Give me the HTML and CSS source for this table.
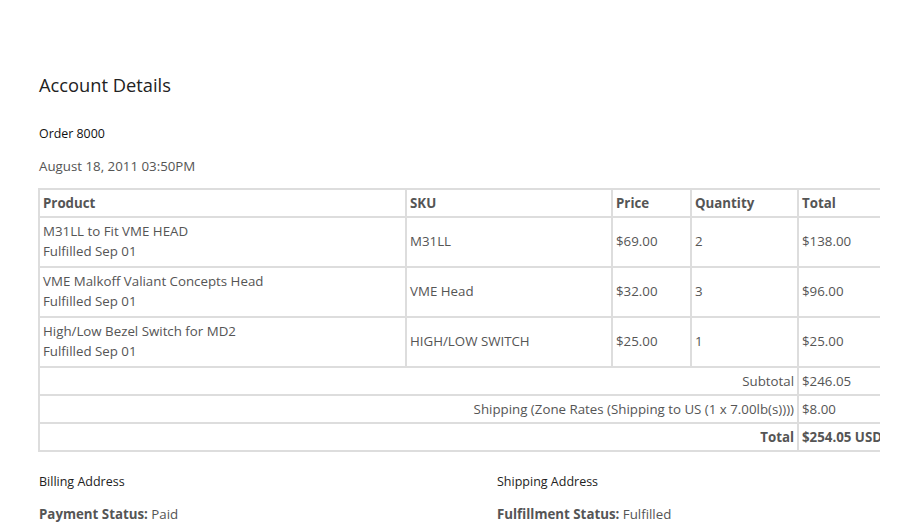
FILE: index.html
```html
<!DOCTYPE html>
<html lang="en">
<head>
    <meta charset="UTF-8">
    <meta name="viewport" content="width=device-width, initial-scale=1.0">
    <title>Account Details</title>
    <link rel="stylesheet" href="styles.css">
</head>
<body>
    <div class="page">
        <h1 class="title">Account Details</h1>
        <p class="order-no">Order 8000</p>
        <p class="order-date">August 18, 2011 03:50PM</p>

        <div class="table-wrap">
            <table class="order-table">
                <thead>
                    <tr>
                        <th class="col-product">Product</th>
                        <th class="col-sku">SKU</th>
                        <th class="col-price">Price</th>
                        <th class="col-qty">Quantity</th>
                        <th class="col-total">Total</th>
                    </tr>
                </thead>
                <tbody>
                    <tr class="item">
                        <td>M31LL to Fit VME HEAD<br>Fulfilled Sep 01</td>
                        <td>M31LL</td>
                        <td>$69.00</td>
                        <td>2</td>
                        <td>$138.00</td>
                    </tr>
                    <tr class="item">
                        <td>VME Malkoff Valiant Concepts Head<br>Fulfilled Sep 01</td>
                        <td>VME Head</td>
                        <td>$32.00</td>
                        <td>3</td>
                        <td>$96.00</td>
                    </tr>
                    <tr class="item">
                        <td>High/Low Bezel Switch for MD2<br>Fulfilled Sep 01</td>
                        <td>HIGH/LOW SWITCH</td>
                        <td>$25.00</td>
                        <td>1</td>
                        <td>$25.00</td>
                    </tr>
                </tbody>
                <tfoot>
                    <tr>
                        <td colspan="4" class="sum-label">Subtotal</td>
                        <td>$246.05</td>
                    </tr>
                    <tr>
                        <td colspan="4" class="sum-label">Shipping (Zone Rates (Shipping to US (1 x 7.00lb(s))))</td>
                        <td>$8.00</td>
                    </tr>
                    <tr class="grand">
                        <td colspan="4" class="sum-label">Total</td>
                        <td>$254.05 USD</td>
                    </tr>
                </tfoot>
            </table>
        </div>

        <div class="addresses">
            <div class="address">
                <p class="address-title">Billing Address</p>
                <p class="status"><strong>Payment Status:</strong> Paid</p>
            </div>
            <div class="address">
                <p class="address-title">Shipping Address</p>
                <p class="status"><strong>Fulfillment Status:</strong> Fulfilled</p>
            </div>
        </div>
    </div>
</body>
</html>
```

FILE: styles.css
```css
* {
    margin: 0;
    padding: 0;
    box-sizing: border-box;
}
body {
    font-family: 'Open Sans', 'Noto Sans', sans-serif;
    font-size: 13.3px;
    color: #555;
    background: #fff;
}
.page {
    padding: 71px 0 0 39px;
}
.title {
    font-size: 18.3px;
    font-weight: normal;
    line-height: 28px;
    color: #222;
}
.order-no {
    margin-top: 25px;
    font-size: 12.4px;
    line-height: 20px;
    color: #111;
}
.order-date {
    margin-top: 12px;
    line-height: 20px;
    color: #555;
}
.table-wrap {
    margin-top: 12px;
    margin-left: -1px;
    width: 842px;
    overflow: hidden;
}
.order-table {
    border-collapse: collapse;
    width: 880px;
    table-layout: fixed;
}
.order-table th,
.order-table td {
    border: 2px solid #ddd;
    padding: 3px;
    line-height: 20px;
    text-align: left;
    vertical-align: middle;
    white-space: nowrap;
}
.order-table th {
    font-weight: bold;
}
.col-product { width: 367px; }
.col-sku { width: 206px; }
.col-price { width: 79px; }
.col-qty { width: 107px; }
.order-table .item td {
    padding-top: 3px;
    padding-bottom: 5px;
}
.order-table .sum-label {
    text-align: right;
}
.grand td {
    font-weight: bold;
}
.addresses {
    display: grid;
    grid-template-columns: 458px 458px;
    margin-top: 20px;
}
.address-title {
    font-size: 12.5px;
    line-height: 20px;
    color: #222;
}
.status {
    margin-top: 12px;
    line-height: 20px;
}
.status strong {
    color: #555;
}
```
